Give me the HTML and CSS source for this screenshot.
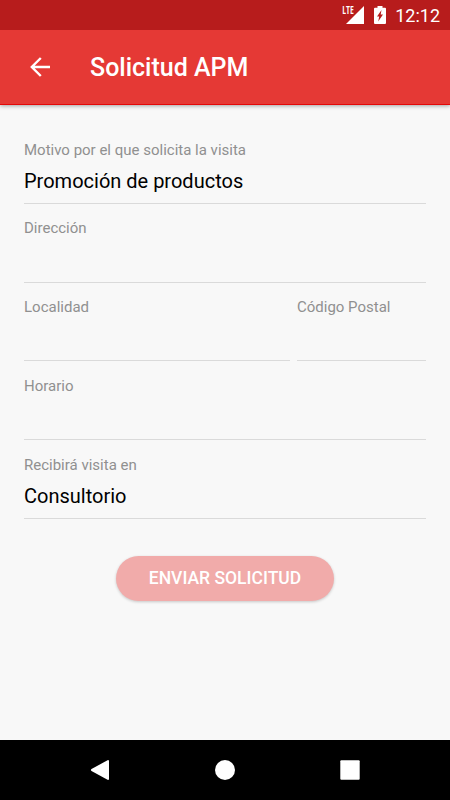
FILE: index.html
```html
<!DOCTYPE html>
<html lang="es">
<head>
    <meta charset="UTF-8">
    <meta name="viewport" content="width=device-width, initial-scale=1.0">
    <title>Solicitud APM</title>
    <link rel="stylesheet" href="styles.css">
</head>
<body>
    <div class="status-bar">
        <svg class="signal-icon" width="24" height="20" viewBox="0 0 24 20" fill="#fff">
            <path d="M24 2v18H6z"/>
        </svg>
        <span class="network">LTE</span>
        <svg class="battery-icon" width="12" height="18" viewBox="0 0 12 18">
            <path fill="#fff" fill-rule="evenodd" d="M3.500 0h5v1.800H11q1 0 1 1V17q0 1-1 1H1q-1 0-1-1V2.800q0-1 1-1h2.500zM7.500 4L3 10.500H5.200L4.200 15.500L9 8.500H6.700z"/>
        </svg>
        <span class="clock">12:12</span>
    </div>

    <header class="toolbar">
        <button class="back-button" type="button" aria-label="Volver">
            <svg width="20" height="20" viewBox="0 0 20 20" fill="none" stroke="#fff" stroke-width="2.4">
                <path d="M20 10H2M10.800 1L1.800 10l9 9"/>
            </svg>
        </button>
        <h1>Solicitud APM</h1>
    </header>

    <main class="form">
        <div class="field">
            <span class="label">Motivo por el que solicita la visita</span>
            <span class="value">Promoción de productos</span>
        </div>
        <div class="field">
            <span class="label">Dirección</span>
        </div>
        <div class="field-row">
            <div class="field">
                <span class="label">Localidad</span>
            </div>
            <div class="field">
                <span class="label">Código Postal</span>
            </div>
        </div>
        <div class="field">
            <span class="label">Horario</span>
        </div>
        <div class="field">
            <span class="label">Recibirá visita en</span>
            <span class="value">Consultorio</span>
        </div>
        <button class="submit-button" type="button">ENVIAR SOLICITUD</button>
    </main>

    <nav class="nav-bar">
        <svg width="20" height="20" viewBox="0 0 20 20" fill="#fff">
            <path d="M18 0q1 0 1 1v18q0 1-1 1L1.500 11q-1.200-1 0-2z"/>
        </svg>
        <svg width="20" height="20" viewBox="0 0 20 20" fill="#fff">
            <circle cx="10" cy="10" r="10"/>
        </svg>
        <svg width="20" height="20" viewBox="0 0 20 20" fill="#fff">
            <rect x=".3" y=".3" width="19.400" height="19.400" rx="1"/>
        </svg>
    </nav>
</body>
</html>
```

FILE: styles.css
```css
* {
    margin: 0;
    padding: 0;
    box-sizing: border-box;
}

body {
    display: flex;
    flex-direction: column;
    height: 100vh;
    font-family: Roboto, sans-serif;
    background: #f8f8f8;
    color: #000;
}

svg {
    display: block;
}

button {
    border: none;
    font-family: inherit;
}

.status-bar {
    position: relative;
    display: flex;
    align-items: center;
    justify-content: flex-end;
    height: 30px;
    padding-right: 10px;
    background: #b71c1c;
    color: #fff;
}

.signal-icon {
    margin: 0 10px 2px 0;
}

.network {
    position: absolute;
    top: 5px;
    right: 96px;
    font-family: "Open Sans", Roboto, sans-serif;
    font-size: 11px;
    font-weight: 700;
    line-height: 10px;
    transform: scaleX(0.62);
    transform-origin: right;
}

.battery-icon {
    margin-right: 9px;
}

.clock {
    padding-top: 2px;
    font-size: 18px;
    line-height: 20px;
}

.toolbar {
    display: flex;
    align-items: center;
    height: 75px;
    padding-left: 30px;
    background: #e53935;
    border-bottom: 1px solid #e40808;
    box-shadow: 0 1px 4px rgba(0, 0, 0, 0.35);
    color: #fff;
}

.back-button {
    margin-right: 40px;
    background: none;
}

h1 {
    padding-top: 1px;
    font-size: 25px;
    font-weight: 500;
}

.form {
    flex: 1;
    display: flex;
    flex-direction: column;
    padding: 20px 24px 0;
}

.field {
    display: flex;
    flex-direction: column;
    height: 78.75px;
    padding-top: 14.7px;
    border-bottom: 1px solid #dadada;
}

.field-row {
    display: grid;
    grid-template-columns: 266px 129px;
    gap: 7px;
}

.label {
    font-size: 15px;
    line-height: 20px;
    color: #909090;
}

.value {
    margin-top: 9px;
    font-size: 20px;
    line-height: 24px;
}

.submit-button {
    align-self: center;
    width: 218px;
    height: 45px;
    margin-top: 37px;
    border-radius: 23px;
    background: #f1abaa;
    box-shadow: 0 1px 3px rgba(0, 0, 0, 0.2);
    color: #fff;
    font-size: 17.5px;
    font-weight: 500;
}

.nav-bar {
    display: flex;
    align-items: center;
    justify-content: space-between;
    height: 60px;
    padding: 0 90px;
    background: #000;
}
```
